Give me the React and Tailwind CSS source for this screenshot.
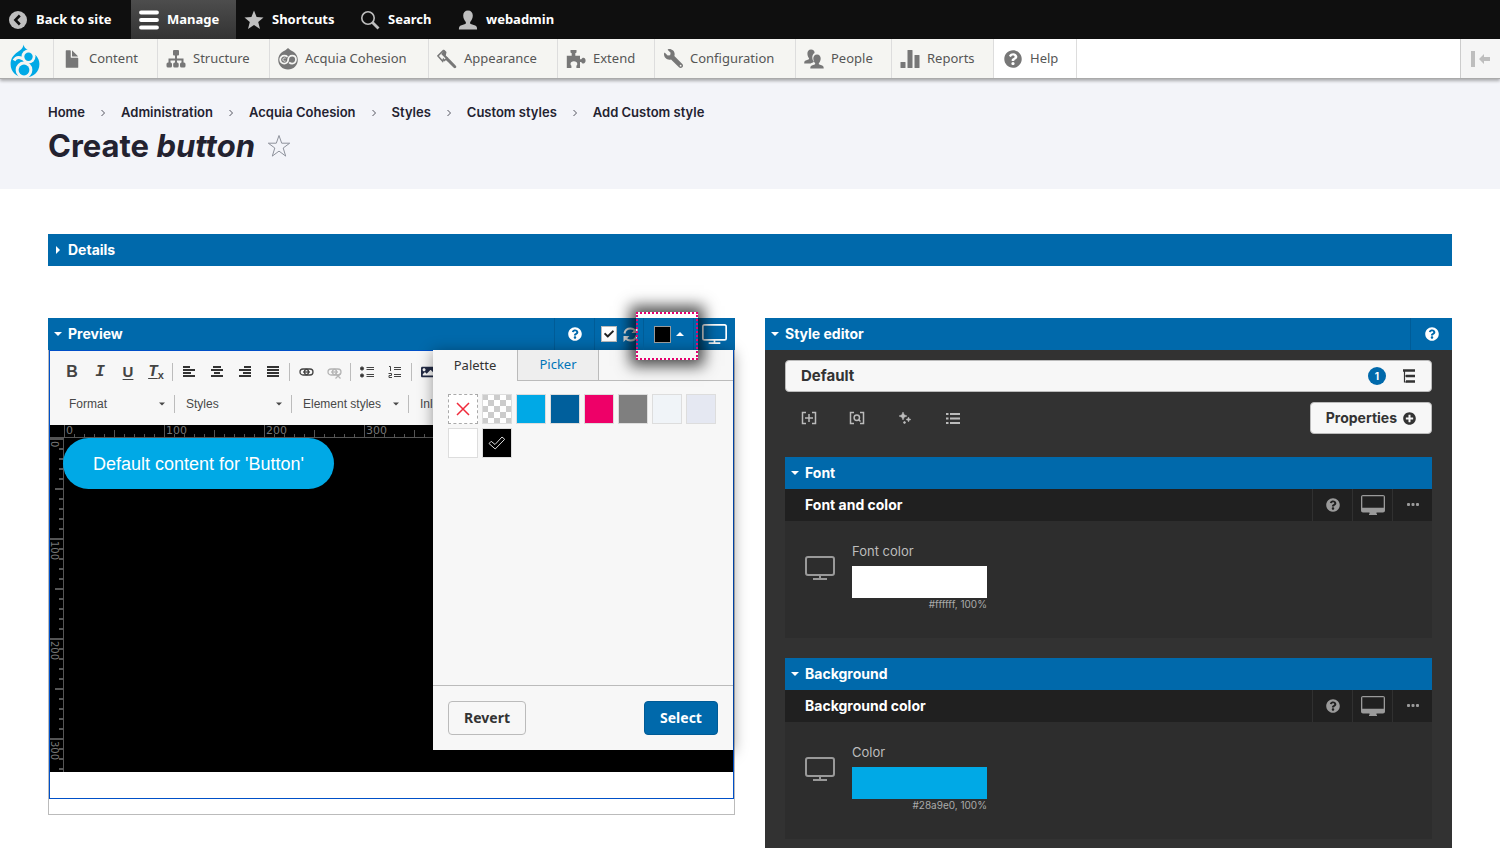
import { FaCheck, FaImage, FaPlusCircle, FaQuestionCircle, FaWrench } from "react-icons/fa";

const UI_FONT = "font-['Noto_Sans',sans-serif]";

/* ---------- toolbar icons ---------- */

const BackIcon = () => (
  <svg width="20" height="20" viewBox="0 0 20 20">
    <circle cx="10" cy="10" r="9" fill="#bebebe" />
    <path d="M11.8 5.5L7.4 10l4.4 4.5" fill="none" stroke="#0f0f0f" strokeWidth="2.6" />
  </svg>
);

const MenuIcon = () => (
  <svg width="20" height="20" viewBox="0 0 20 20" stroke="#fff" strokeWidth="3.8" strokeLinecap="round">
    <path d="M2 2.500h16M2 10h16M2 17.500h16" />
  </svg>
);

const StarIcon = () => (
  <svg width="20" height="20" viewBox="0 0 20 20" fill="#bebebe">
    <path d="M10 .6l2.600 6.400 6.900.5-5.300 4.400 1.800 7L10 15.100l-6 3.800 1.800-7L.5 7.500l6.900-.5z" />
  </svg>
);

const SearchIcon = () => (
  <svg width="20" height="20" viewBox="0 0 20 20" fill="none" stroke="#bebebe">
    <circle cx="8" cy="8" r="6.200" strokeWidth="1.600" />
    <path d="M12.500 12.500l6 6" strokeWidth="2.800" />
  </svg>
);

const UserIcon = () => (
  <svg width="20" height="20" viewBox="0 0 20 20" fill="#bebebe">
    <path d="M10 .5c3 0 4.800 2 4.800 5 0 2.600-1.200 4.900-2.400 6.200-.5.6-.4 2 .4 2.400l4.400 1.500c1.200.5 1.900 1.500 1.900 3.900H.9c0-2.400.7-3.400 1.900-3.900l4.400-1.500c.8-.4.9-1.800.4-2.400C6.400 10.400 5.200 8.100 5.200 5.500c0-3 1.800-5 4.800-5z" />
  </svg>
);

const DrupalIcon = () => (
  <svg width="30" height="34" viewBox="0 0 30 34">
    <path
      d="M13.500.5c.7 3.600 3.100 4.800 7 7 4.600 2.500 8.900 6.300 8.900 12.500 0 8-6 13.500-14.400 13.500S.6 28 .6 20C.6 14.500 3.600 10.900 7.300 8.200c3-2.100 5.700-3.500 6.200-7.700z"
      fill="#00a9e6"
    />
    <circle cx="14" cy="26" r="8.400" fill="#f5f5f2" />
    <circle cx="18.500" cy="12.500" r="7" fill="#f5f5f2" />
    <path d="M4 16.500c3-5.500 9-2.500 13.500 1.500" fill="none" stroke="#f5f5f2" strokeWidth="3" />
    <circle cx="18.500" cy="12.700" r="4.200" fill="#00a9e6" />
    <circle cx="14" cy="26" r="5.400" fill="#00a9e6" />
  </svg>
);

const FileIcon = () => (
  <svg width="20" height="20" viewBox="0 0 16 16" fill="#777">
    <path d="M12.500 7h-5c-.3 0-.5-.2-.5-.5v-5c0-.3-.2-.5-.5-.5h-3c-.3 0-.5.2-.5.500v13c0 .3.200.5.5.5h9c.3 0 .5-.2.5-.5v-7c0-.3-.2-.5-.5-.5zM8.500 6h4c.3 0 .3-.2.100-.4L8.400 1.400c-.2-.2-.4-.1-.4.100v4c0 .3.200.5.5.5z" />
  </svg>
);

const StructureIcon = () => (
  <svg width="20" height="20" viewBox="0 0 20 20" fill="#777">
    <rect x="7" y="1" width="6" height="5.500" rx="1" />
    <path d="M3.500 15v-4.500h13V15M10 6v9" fill="none" stroke="#777" strokeWidth="2" />
    <rect x=".5" y="13.500" width="5.500" height="5" rx="1.500" />
    <rect x="7.200" y="13.500" width="5.500" height="5" rx="1.500" />
    <rect x="14" y="13.500" width="5.500" height="5" rx="1.500" />
  </svg>
);

const CohesionIcon = () => (
  <svg width="20" height="22" viewBox="0 0 20 22">
    <path d="M10 0c1.500 1.600 3 2.500 5 3.500 3 1.700 4.800 4.600 4.800 8.200 0 5.700-4.300 9.800-9.800 9.800S.2 17.400.2 11.700C.2 8.100 2 5.200 5 3.500 7 2.500 8.500 1.600 10 0z" fill="#777" />
    <path
      d="M9.500 8.800C8.600 7.900 7.400 7.600 6.200 7.600c-2.300 0-4 1.800-4 4s1.700 4 4 4 4-1.800 4-4 1.700-4 4-4 3.800 1.800 3.800 4-1.600 4-3.800 4c-1.300 0-2.300-.5-3-1.300"
      fill="none"
      stroke="#f5f5f2"
      strokeWidth="1.800"
    />
    <circle cx="14.100" cy="11.600" r="1.600" fill="#777" />
    <path d="M7.500 10.200c-1.500-.6-2.600.2-2.600 1.400s1.100 2 2.600 1.400" fill="none" stroke="#f5f5f2" />
  </svg>
);

const BrushIcon = () => (
  <svg width="20" height="20" viewBox="0 0 20 20" fill="#777">
    <path d="M7.300.8L9.500 3 8.800 6.500l2.500 2.400-1.700 1.700-5.400-5.600z" />
    <path d="M6.800 1L.9 6.900l4.800 5.300.7-2 1.100 1.300 2.300-2.300" fill="none" stroke="#777" strokeWidth="1.500" />
    <path d="M10.500 8.200l2.600 2.600 5.500 5.600c1 1 .9 1.700.3 2.300-.6.600-1.600.6-2.400-.2L11 12.900 8.200 10.400z" />
  </svg>
);

const PuzzleIcon = () => (
  <svg width="20" height="20" viewBox="0 0 20 20" fill="#777">
    <path d="M4.500 1h6v2.400l-1.200.8v2.500H14v3.600h1.300c.4-1.100 1.200-1.600 2.100-1.600 1.300 0 2.200 1.200 2.200 2.900s-.9 2.900-2.200 2.900c-.9 0-1.700-.5-2.100-1.600H14V19h-3.600v-2.200c.6-.5.900-1.100.9-1.800 0-1.700-1.500-2.700-3.400-2.700s-3.400 1-3.400 2.700c0 .7.300 1.300.9 1.800V19H.8V6.700h4.900V4.200l-1.200-.8z" />
  </svg>
);

const PeopleIcon = () => (
  <svg width="20" height="20" viewBox="0 0 20 20" fill="#777">
    <path d="M7 .5c2.500 0 3.600 1.600 3.600 3.400-1.600.9-2.300 2.600-2.300 4.500 0 1.800.7 3.200 1.700 4.300-.9.700-2.300 1.100-3.400 1.900H.2c0-2 .6-2.700 1.600-3l2.500-1c.9-.4 1-1 .5-1.700C4 7.900 3.400 6.300 3.400 4.500 3.400 2.300 4.600.5 7 .5z" />
    <path d="M13 5.500c2.500 0 3.700 1.800 3.700 4 0 1.900-.8 3.500-1.700 4.500-.4.600-.2 1.300.4 1.600l2.800 1c1.100.4 1.500 1.200 1.500 2.900H6.300c0-1.700.4-2.500 1.500-2.900l2.800-1c.6-.3.800-1 .4-1.600-.9-1-1.700-2.600-1.700-4.500 0-2.200 1.200-4 3.700-4z" />
  </svg>
);

const ReportsIcon = () => (
  <svg width="20" height="20" viewBox="0 0 20 20" fill="#777">
    <rect x=".5" y="13" width="5" height="6" rx=".6" />
    <rect x="7.500" y="1" width="5" height="18" rx=".6" />
    <rect x="14.500" y="6" width="5" height="13" rx=".6" />
  </svg>
);

/* ---------- shared drawings ---------- */

const Caret = ({ dir = "down", className = "" }) => (
  <svg width="8" height="8" viewBox="0 0 8 8" fill="currentColor" className={className}>
    {dir === "down" && <path d="M0 2h8L4 6z" />}
    {dir === "up" && <path d="M0 6h8L4 2z" />}
    {dir === "right" && <path d="M2 0v8l4-4z" />}
  </svg>
);

const Monitor = ({ width, height, className }) => (
  <svg width={width} height={height} viewBox="0 0 30 24" fill="none" stroke="currentColor" strokeWidth="2" className={className}>
    <rect x="1" y="1" width="28" height="18" rx="2" />
    <path d="M15 19v4M8 23h14" />
  </svg>
);

const Desktop = () => (
  <svg width="24" height="20" viewBox="0 0 24 20" fill="#9a9a9a">
    <path d="M2 0h20c1.100 0 2 .9 2 2v13.500c0 1.100-.9 2-2 2h-6.500V19H16v1.200H8V19h.5v-1.500H2c-1.100 0-2-.9-2-2V2C0 .9.900 0 2 0zm-.7 1.300v11.400h21.400V1.300z" />
  </svg>
);

const Lines = ({ rows }) => (
  <svg width="12" height="12" viewBox="0 0 12 12" stroke="#333" strokeWidth="2">
    {rows.map(([x1, x2], i) => (
      <path key={i} d={`M${x1} ${i * 3 + 1}H${x2}`} />
    ))}
  </svg>
);

const LinkIcon = ({ broken }) => (
  <svg width="15" height="13" viewBox="0 0 15 13" fill="none" stroke={broken ? "#b5b5b5" : "#444"} strokeWidth="1.300">
    <rect x="1" y="3" width="8.500" height="6" rx="3" />
    <rect x="5.500" y="3" width="8.500" height="6" rx="3" />
    <path d="M4 6h7" />
    {broken && <path d="M8.500 7.500l5 5M13.500 7.500l-5 5" />}
  </svg>
);

const BulletIcon = () => (
  <svg width="14" height="12" viewBox="0 0 14 12" stroke="#444">
    <circle cx="2" cy="2.500" r="1.600" fill="#333" />
    <circle cx="2" cy="9.500" r="1.600" fill="#333" />
    <path d="M6.500 1.500H14M6.500 3.500H14M6.500 8.500H14M6.500 10.500H14" />
  </svg>
);

const NumberedIcon = () => (
  <svg width="14" height="14" viewBox="0 0 14 14" stroke="#444" fill="none">
    <path d="M6 2.500h7M6 4.500h7M6 9.500h7M6 11.500h7M1 1.500h1.500V6M.5 8.500H3.500v2H1v2h3" />
  </svg>
);

const RefreshIcon = () => (
  <svg width="15" height="15" viewBox="0 0 15 15" fill="none" stroke="#e8e8e8" strokeWidth="2">
    <path d="M1.500 6.500C2 3.500 4.400 1.500 7.500 1.500c2.200 0 3.900 1 5 2.800M13.500 8.500c-.5 3-2.900 5-6 5-2.200 0-3.900-1-5-2.800" />
    <path d="M14.500 0v6H8.500zM.5 15V9h6z" fill="#e8e8e8" stroke="none" />
  </svg>
);

/* ---------- admin toolbar ---------- */

const tabs = [
  { label: "Back to site", icon: BackIcon, width: "w-[131px]" },
  { label: "Manage", icon: MenuIcon, width: "w-[105px]", active: true },
  { label: "Shortcuts", icon: StarIcon, width: "w-[116px]" },
  { label: "Search", icon: SearchIcon, width: "w-[98px]" },
  { label: "webadmin", icon: UserIcon, width: "w-[121px]" },
];

const trayItems = [
  { label: "Content", icon: FileIcon, width: "w-[104px]" },
  { label: "Structure", icon: StructureIcon, width: "w-[112px]" },
  { label: "Acquia Cohesion", icon: CohesionIcon, width: "w-[159px]" },
  { label: "Appearance", icon: BrushIcon, width: "w-[129px]" },
  { label: "Extend", icon: PuzzleIcon, width: "w-[97px]" },
  { label: "Configuration", icon: () => <FaWrench size={19} color="#777" className="-scale-x-100" />, width: "w-[141px]" },
  { label: "People", icon: PeopleIcon, width: "w-[96px]" },
  { label: "Reports", icon: ReportsIcon, width: "w-[102px]" },
  { label: "Help", icon: () => <FaQuestionCircle size={18} color="#777" />, width: "w-[84px]", active: true },
];

function AdminToolbar() {
  return (
    <div className={`relative z-10 ${UI_FONT}`}>
      <nav className="flex h-[39px] bg-[#0f0f0f] text-[13px] font-bold text-white">
        {tabs.map(({ label, icon: Icon, width, active }) => (
          <a
            key={label}
            href="#"
            className={`flex items-center gap-2 whitespace-nowrap pl-2 ${width} ${active ? "bg-linear-to-b from-[#4d4d4d] to-[#333]" : ""}`}
          >
            <Icon />
            {label}
          </a>
        ))}
      </nav>
      <nav className="flex h-10 border-b border-[#aaa] bg-white text-[13px] text-[#565656] shadow-[0_2px_3px_rgba(0,0,0,0.3)]">
        <a href="#" aria-label="Drupal" className="flex w-[53px] items-center bg-[#f5f5f2] pl-[10px] pt-1">
          <DrupalIcon />
        </a>
        {trayItems.map(({ label, icon: Icon, width, active }) => (
          <a
            key={label}
            href="#"
            className={`flex items-center gap-[7px] whitespace-nowrap border-l border-[#ddd] pl-2 ${width} ${active ? "border-r bg-white pl-[9px]" : "bg-[#f5f5f2]"}`}
          >
            <span className="flex w-5 justify-center">
              <Icon />
            </span>
            {label}
          </a>
        ))}
        <button aria-label="Vertical orientation" className="ml-auto flex w-10 items-center justify-center border-l border-[#ccc] bg-[#f5f5f5]">
          <svg width="20" height="16" viewBox="0 0 20 16" fill="#bebebe">
            <rect x="0" y="0" width="4" height="16" />
            <path d="M8 8l5-5v3h6v4h-6v3z" />
          </svg>
        </button>
      </nav>
    </div>
  );
}

/* ---------- page header ---------- */

const crumbs = ["Home", "Administration", "Acquia Cohesion", "Styles", "Custom styles", "Add Custom style"];

function PageHeader() {
  return (
    <header className="h-[110px] bg-[#f3f4f9] px-12 pt-6 text-[#232230]">
      <nav className="flex h-5 items-center text-[13px] font-semibold">
        {crumbs.map((crumb, i) => (
          <div key={crumb} className="flex items-center">
            {i > 0 && (
              <svg width="36" height="8" viewBox="0 0 36 8" fill="none" stroke="#545560">
                <path d="M16.500 1l3 3-3 3" />
              </svg>
            )}
            <a href="#">{crumb}</a>
          </div>
        ))}
      </nav>
      <div className="flex h-[46px] items-center gap-3">
        <h1 className="text-[31px] font-bold">
          Create <em>button</em>
        </h1>
        <button aria-label="Add to shortcuts">
          <svg width="24" height="24" viewBox="0 0 24 24" fill="none" stroke="#8e929c">
            <path d="M12 1.500l2.700 7.700h8l-6.500 4.800 2.500 8.100-6.700-5-6.700 5 2.500-8.100L1.300 9.200h8z" />
          </svg>
        </button>
      </div>
    </header>
  );
}

/* ---------- preview ---------- */

function PanelTitle({ children, dir = "down" }) {
  return (
    <button className="flex flex-1 items-center gap-[6px] pl-[6px] text-left">
      <Caret dir={dir} />
      {children}
    </button>
  );
}

const BAR = "flex h-8 bg-[#0069ab] text-sm font-bold text-white";

const Divider = () => <span className="mx-[2px] h-[18px] w-px bg-[#bcbcbc]" />;

const Tool = ({ label, children }) => (
  <button aria-label={label} className="flex h-7 w-7 items-center justify-center">
    {children}
  </button>
);

function EditorToolbar() {
  return (
    <div className="h-[74px] overflow-hidden bg-[#f7f7f7] pl-2 pt-[7px] font-['Liberation_Sans',sans-serif] text-[#444]">
      <div className="flex items-center text-base font-bold">
        <Tool label="Bold">B</Tool>
        <Tool label="Italic"><span className="font-['Liberation_Mono',monospace] italic">I</span></Tool>
        <Tool label="Underline"><span className="text-[15px] underline underline-offset-2">U</span></Tool>
        <Tool label="Remove format">
          <span className="font-['Liberation_Mono',monospace] italic underline underline-offset-2">T</span>
          <sub className="text-[11px]">x</sub>
        </Tool>
        <Divider />
        <Tool label="Align left"><Lines rows={[[0, 7], [0, 12], [0, 8], [0, 12]]} /></Tool>
        <Tool label="Center"><Lines rows={[[2, 10], [0, 12], [3, 9], [0, 12]]} /></Tool>
        <Tool label="Align right"><Lines rows={[[5, 12], [0, 12], [4, 12], [0, 12]]} /></Tool>
        <Tool label="Justify"><Lines rows={[[0, 12], [0, 12], [0, 12], [0, 12]]} /></Tool>
        <Divider />
        <Tool label="Link"><LinkIcon /></Tool>
        <Tool label="Unlink"><LinkIcon broken /></Tool>
        <Divider />
        <Tool label="Bulleted list"><BulletIcon /></Tool>
        <Tool label="Numbered list"><NumberedIcon /></Tool>
        <Divider />
        <Tool label="Image">
          <FaImage size={14} color="#222a44" />
        </Tool>
      </div>
      <div className="mt-1 flex items-center text-xs text-[#484848]">
        {["Format", "Styles", "Element styles", "Inline styles"].map((name) => (
          <div key={name} className="relative flex w-[117px] shrink-0 items-center">
            <select aria-label={name} className="h-7 w-full appearance-none pl-[11px]">
              <option>{name}</option>
            </select>
            <Caret className="pointer-events-none absolute right-[10px] h-[6px] w-[6px]" />
            <span className="absolute right-0 h-[18px] w-px bg-[#bcbcbc]" />
          </div>
        ))}
      </div>
    </div>
  );
}

const tickSize = (n) => (n % 100 === 0 ? 13 : n % 50 === 0 ? 8 : 4);
const range = (end) => Array.from({ length: Math.ceil(end / 10) }, (_, i) => i * 10);

function Canvas() {
  return (
    <div className="overflow-hidden bg-black">
      <svg className="block h-[13px] w-full overflow-visible" stroke="#555">
        <path d="M0 12.500H2000" />
        {range(670).map((n) => (
          <path key={n} d={`M${n + 14.5} 13v-${tickSize(n)}`} />
        ))}
        {range(670).filter((n) => n % 100 === 0).map((n) => (
          <text key={n} x={n + 16} y="9" fontSize="11" fill="#777" stroke="none" className="font-['DejaVu_Sans',sans-serif]">{n}</text>
        ))}
      </svg>
      <div className="flex h-[334px] items-start">
        <svg className="h-full w-[13px] shrink-0 overflow-visible" stroke="#555">
          <path d="M13.500 0V334" />
          {range(333).map((n) => (
            <path key={n} d={`M14 ${n + 1}h-${tickSize(n) + 1}`} strokeWidth="2" />
          ))}
          {range(333).filter((n) => n % 100 === 0).map((n) => (
            <text key={n} transform={`translate(1 ${n + 3}) rotate(90)`} fontSize="10" fill="#777" stroke="none" className="font-['DejaVu_Sans',sans-serif]">{n}</text>
          ))}
        </svg>
        <button className="relative h-[51px] rounded-full bg-[#00a9e6] px-[30px] font-['Liberation_Sans',sans-serif] text-lg text-white">
          Default content for 'Button'
        </button>
      </div>
    </div>
  );
}

const swatches = [
  { name: "Light blue", color: "bg-[#00a9e6]" },
  { name: "Blue", color: "bg-[#005f9c]" },
  { name: "Pink", color: "bg-[#ee0068]" },
  { name: "Gray", color: "bg-[#7f7f7f]" },
  { name: "Ice", color: "bg-[#f0f4f8]" },
  { name: "Lavender", color: "bg-[#e5e8f2]" },
  { name: "White", color: "bg-white" },
];

function ColorPopover() {
  return (
    <div className={`absolute right-[2px] top-8 flex h-[400px] w-[300px] flex-col bg-[#f7f7f7] shadow-[0_2px_14px_rgba(0,0,0,0.4)] ${UI_FONT}`}>
      <div className="flex h-[31px] text-[13px]">
        <button className="w-[84px] text-[#333]">Palette</button>
        <button className="w-[82px] border-x border-b border-[#bbb] bg-[#eee] text-[#0074b8]">Picker</button>
        <span className="flex-1 border-b border-[#bbb]" />
      </div>
      <div className="flex flex-1 flex-wrap content-start gap-1 px-[15px] pt-[13px]">
        <button aria-label="None" className="flex h-[30px] w-[30px] items-center justify-center border border-dashed border-[#aaa] bg-white">
          <svg width="14" height="14" viewBox="0 0 14 14" stroke="#f02b3c" strokeWidth="1.500">
            <path d="M1 1l12 12M13 1L1 13" />
          </svg>
        </button>
        <button aria-label="Transparent" className="h-[30px] w-[30px] border border-[#ddd]">
          <svg width="28" height="28" viewBox="0 0 28 28">
            <path fill="#fff" d="M0 0h28v28H0z" />
            {[0, 1, 2, 3, 4].map((row) =>
              [0, 1, 2, 3, 4].map((col) =>
                (row + col) % 2 === 0 ? <rect key={`${row}${col}`} x={col * 6 - 1} y={row * 6 - 1} width="6" height="6" fill="#ccc" /> : null
              )
            )}
          </svg>
        </button>
        {swatches.map(({ name, color }) => (
          <button key={name} aria-label={name} className={`h-[30px] w-[30px] border border-[#ddd] ${color}`} />
        ))}
        <button aria-label="Black" className="flex h-[30px] w-[30px] items-center justify-center border border-[#ddd] bg-black">
          <svg width="18" height="14" viewBox="0 0 18 14" fill="none" stroke="#ddd">
            <path d="M1 7.500l2.200-2.200L7 8.500 14 1l2.700 2.300L7.200 13z" strokeLinejoin="round" />
          </svg>
        </button>
      </div>
      <div className="flex h-[65px] items-center justify-between border-t border-[#bbb] px-[15px] text-sm font-bold">
        <button className="h-[34px] w-[78px] rounded border border-[#bbb] text-[#333]">Revert</button>
        <button className="h-[34px] w-[74px] rounded border border-[#005b96] bg-[#0069ab] text-white">Select</button>
      </div>
    </div>
  );
}

const cell = "flex items-center justify-center border-l border-[#005c97]";

function Preview() {
  return (
    <section className="relative self-start">
      <div className={BAR}>
        <PanelTitle>Preview</PanelTitle>
        <button aria-label="Help" className={`${cell} w-10`}>
          <FaQuestionCircle size={14} />
        </button>
        <div className={`${cell} w-[49px] gap-[6px]`}>
          <label className="relative flex">
            <input type="checkbox" defaultChecked aria-label="Auto refresh" className="h-4 w-4 appearance-none border border-[#bbb] bg-white" />
            <FaCheck size={10} color="#222" className="pointer-events-none absolute left-[3px] top-[3px]" />
          </label>
          <button aria-label="Refresh"><RefreshIcon /></button>
        </div>
        <div className={`${cell} relative z-20 w-[50px]`}>
          <button aria-label="Preview background color" className="flex items-center gap-[5px]">
            <span className="h-[17px] w-[17px] border border-[#999] bg-black" />
            <Caret dir="up" />
          </button>
          <span className="pointer-events-none absolute -left-2 -right-[5px] -top-[6px] h-12 border-2 border-dotted border-[#e6006e] shadow-[0_0_14px_6px_rgba(0,0,0,0.7)]" />
        </div>
        <button aria-label="Screen size" className={`${cell} w-[42px]`}>
          <Monitor width={25} height={20} />
        </button>
      </div>
      <div className="border border-t-0 border-[#bbb] pb-[15px]">
        <div className="border border-[#0050c8] pb-[26px]">
          <EditorToolbar />
          <Canvas />
        </div>
      </div>
      <ColorPopover />
    </section>
  );
}

/* ---------- style editor ---------- */

function StyleGroup({ title, subtitle, label, color, value }) {
  const id = title.toLowerCase();
  return (
    <div>
      <div className={BAR}>
        <PanelTitle>{title}</PanelTitle>
      </div>
      <div className="flex h-8 items-stretch bg-[#202020] text-[#9a9a9a]">
        <h3 className="flex flex-1 items-center pl-5 text-sm font-bold text-white">{subtitle}</h3>
        <button aria-label="Help" className="flex w-10 items-center justify-center border-l border-[#303030]">
          <FaQuestionCircle size={14} />
        </button>
        <button aria-label="Breakpoint" className="flex w-10 items-center justify-center border-l border-[#303030]">
          <Desktop />
        </button>
        <button aria-label="More" className="flex w-10 items-center justify-center border-l border-[#303030]">
          <svg width="12" height="4" viewBox="0 0 12 4" fill="currentColor">
            <rect x="0" y="0" width="3" height="3" rx="1" />
            <rect x="4.500" y="0" width="3" height="3" rx="1" />
            <rect x="9" y="0" width="3" height="3" rx="1" />
          </svg>
        </button>
      </div>
      <div className="flex h-[117px] items-start gap-[17px] bg-[#2d2d2d] pl-5 pt-5">
        <Monitor width={30} height={24} className="mt-[15px] text-[#999]" />
        <div className="w-[135px]">
          <label htmlFor={id} className="block text-[13px] leading-5 text-[#bdbdbd]">{label}</label>
          <button id={id} aria-label={label} className={`mt-[5px] block h-8 w-full ${color}`} />
          <p className="text-right text-[10px] leading-3 text-[#aaa]">{value}</p>
        </div>
      </div>
    </div>
  );
}

function StyleEditor() {
  return (
    <section className="flex flex-col bg-[#323232]">
      <div className={BAR}>
        <PanelTitle>Style editor</PanelTitle>
        <button aria-label="Help" className={`${cell} w-[42px]`}>
          <FaQuestionCircle size={14} />
        </button>
      </div>
      <div className="px-5 py-[10px]">
        <div className="flex h-8 items-center rounded border border-[#bbb] bg-[#f7f7f7] px-[15px] text-[#333]">
          <span className="flex-1 text-[15px] font-bold">Default</span>
          <span className="flex h-[18px] w-[18px] items-center justify-center rounded-full bg-[#0069ab] text-[10px] font-bold text-white">1</span>
          <button aria-label="Style tree" className="ml-4">
            <svg width="14" height="14" viewBox="0 0 14 14" fill="none" stroke="#333" strokeWidth="2.400">
              <path d="M1 1.500h12M4 7h9M4 12.500h9" />
              <path d="M2.500 1v12h2M2.500 7h2" strokeWidth="1.200" />
            </svg>
          </button>
        </div>
        <div className="mt-[10px] flex items-center justify-between">
          <div className="flex gap-7 pl-[14px] text-[#bbb]">
            <button aria-label="Add">
              <svg width="20" height="20" viewBox="0 0 20 20" fill="none" stroke="currentColor" strokeWidth="1.500">
                <path d="M7 4.500H3.500v11H7M13 4.500h3.500v11H13M10 6v8M6 10h8" />
              </svg>
            </button>
            <button aria-label="Find">
              <svg width="20" height="20" viewBox="0 0 20 20" fill="none" stroke="currentColor" strokeWidth="1.500">
                <path d="M7 4.500H3.500v11H7M13 4.500h3.500v11H13M11.500 11.500l2 2" />
                <circle cx="9.800" cy="9.700" r="2.700" />
              </svg>
            </button>
            <button aria-label="Effects">
              <svg width="20" height="20" viewBox="0 0 20 20" fill="currentColor">
                <path d="M8 4l1.200 2.800L12 8 9.200 9.200 8 12 6.800 9.200 4 8l2.800-1.200zM13.500 9l.7 1.800 1.800.7-1.800.7-.7 1.800-.7-1.800-1.800-.7 1.800-.7zM9.500 13l.5 1 1 .5-1 .5-.5 1-.5-1-1-.5 1-.5z" stroke="currentColor" strokeWidth=".5" />
              </svg>
            </button>
            <button aria-label="List">
              <svg width="20" height="20" viewBox="0 0 20 20" fill="none" stroke="currentColor" strokeWidth="2.200">
                <path d="M7 6h10M7 10.500h10M7 15h10M3 6h2.500M3 10.500h2.500M3 15h2.500" />
              </svg>
            </button>
          </div>
          <button className="flex h-8 items-center gap-[6px] rounded border border-[#bbb] bg-[#f7f7f7] px-[15px] text-sm font-bold text-[#333]">
            Properties
            <FaPlusCircle size={13} />
          </button>
        </div>
        <div className="mt-[23px] flex flex-col gap-5">
          <StyleGroup title="Font" subtitle="Font and color" label="Font color" color="bg-white" value="#ffffff, 100%" />
          <StyleGroup title="Background" subtitle="Background color" label="Color" color="bg-[#00a9e6]" value="#28a9e0, 100%" />
        </div>
      </div>
    </section>
  );
}

export default function App() {
  return (
    <div className="flex min-h-screen flex-col bg-white font-['Inter',sans-serif]">
      <AdminToolbar />
      <PageHeader />
      <main className="flex flex-1 flex-col px-12 pt-[45px]">
        <div className={BAR}>
          <PanelTitle dir="right">Details</PanelTitle>
        </div>
        <div className="mt-[52px] grid flex-1 grid-cols-2 gap-[30px]">
          <Preview />
          <StyleEditor />
        </div>
      </main>
    </div>
  );
}
